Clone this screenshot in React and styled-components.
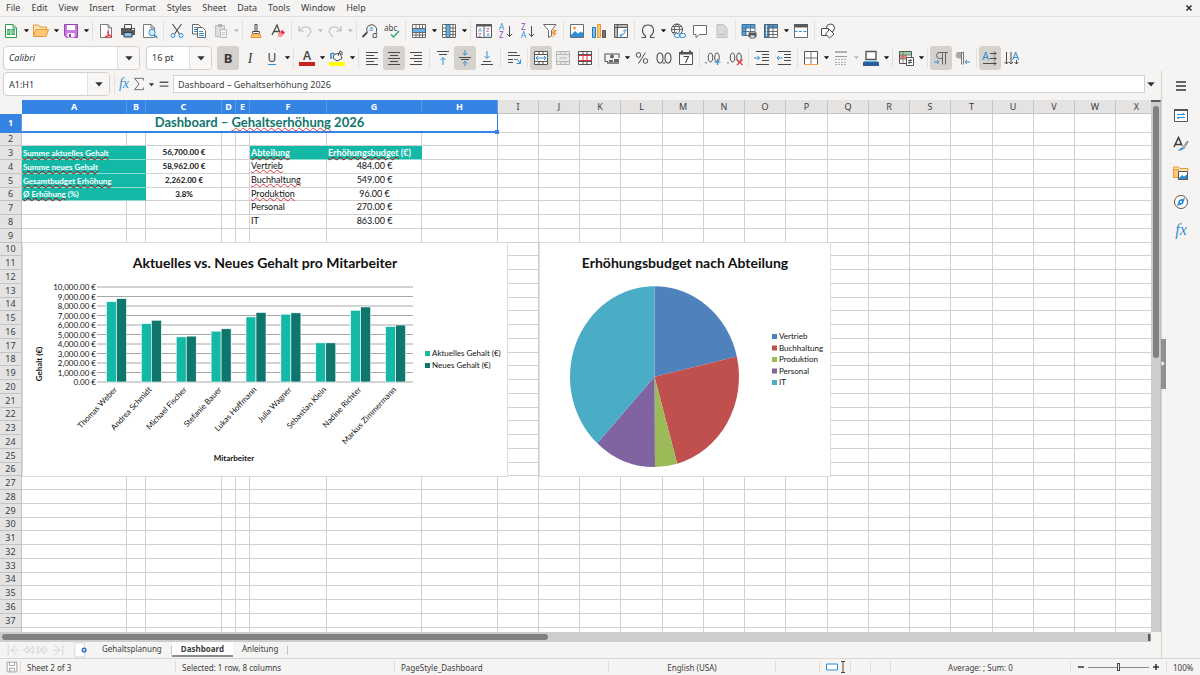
import React from 'react';
import styled, { createGlobalStyle, css } from 'styled-components';

const Global = createGlobalStyle`
  *, *::before, *::after { box-sizing: border-box; }
  body { margin: 0; background: #f5f4f2; color: #3c4043; font-family: "Noto Sans", sans-serif; font-size: 8px; }
  button, input, select { font: inherit; color: inherit; margin: 0; }
`;

const INK = '#4a4a4a';
const BLUE = '#2f8fd8';
const RED = '#e0353b';

/* ---------- icons, all on a 16 unit grid ---------- */

const line = (d, stroke = INK, width = 1) => (
  <path d={d} fill="none" stroke={stroke} strokeWidth={width} />
);
const fill = (d, color) => <path d={d} fill={color} />;
const glyph = (x, y, size, color, text, family = 'Noto Sans') => (
  <text x={x} y={y} fontSize={size} fill={color} fontFamily={family}>{text}</text>
);
const page = (x = 2, y = 1) => (
  <path d={`M${x + 0.5} ${y + 0.5}h7.5l3.5 3.5v9.5h-11zM${x + 8} ${y + 0.5}v3.5h3.5`} fill="#fff" stroke="#7a7a7a" />
);

const icons = {
  new: <>
    <path d="M2.500 1.500h7.500l3.500 3.500v9.500h-11z" fill="#fff" stroke="#2f9e4f" />
    {fill('M4 6h8v6h-8z', '#35a853')}{line('M4 8h8M4 10h8M8 6v6', '#d9f2df', 0.8)}{line('M10 1.500v3.500h3.500', '#2f9e4f')}
  </>,
  open: <>
    <path d="M.5 13.500v-11.500h5l1.500 2h6.500v3" fill="#fce3b4" stroke="#e9983a" />
    <path d="M3 6.500h12.500l-2.500 7h-12.500z" fill="#fbc873" stroke="#e9983a" />
  </>,
  save: <>
    <path d="M1.500 1.500h13v13h-11l-2-2z" fill="#c77ddb" stroke="#9a3fb5" />
    {fill('M4 2h8v5h-8z', '#fff')}{fill('M4.500 10h7v4.500h-7z', '#fff')}{fill('M6 11h2v3h-2z', '#9a3fb5')}
  </>,
  pdf: <>{page(2, 1)}{line('M8 15c2-2 3-5 2-8M7 14c2-1.500 4-2 7-1M9.500 9c1 2.500 2.500 4.500 4.500 5.500', RED, 1.2)}</>,
  print: <>
    {line('M4.500 5v-3.500h7v3.500')}{fill('M1 5h14v7h-14z', '#5a5a5a')}
    <path d="M4 9.500h8v4.500h-8z" fill="#7fc0ee" stroke="#3c3c3c" />{fill('M12 6h2v1h-2z', '#fff')}
  </>,
  preview: <>{page(1, 1)}<circle cx="10" cy="9.500" r="3.200" fill="#d6ecfb" stroke={BLUE} />{line('M12.300 12l3 3', BLUE, 1.4)}</>,
  cut: <>
    {line('M3.500 1l7 10M12.500 1l-7 10', INK, 1.1)}
    <circle cx="4" cy="12.500" r="2" fill="none" stroke={BLUE} /><circle cx="12" cy="12.500" r="2" fill="none" stroke={BLUE} />
  </>,
  copy: <>
    <path d="M1.500 1.500h6l2 2v7.500h-8z" fill="#fff" stroke="#6a6a6a" />{line('M3 4.500h4M3 6.500h4M3 8.500h3', BLUE)}
    <path d="M6.500 4.500h5l3 3v7h-8z" fill="#fff" stroke="#6a6a6a" />{line('M8 8.500h4M8 10.500h5M8 12.500h5', BLUE)}
  </>,
  paste: <>
    <path d="M2.500 2.500h9v11h-9z" fill="#dedede" stroke="#bdbdbd" />{fill('M5 1h4v3h-4z', '#b5b5b5')}
    <path d="M7.500 6.500h6v8h-6z" fill="#f4f4f4" stroke="#bdbdbd" />{line('M9 9.500h3M9 11.500h3', '#c8c8c8')}
  </>,
  brush: <>
    {line('M7 8v-6.500h2v6.500')}<path d="M4.500 8.500h7v2h-7z" fill="#fff" stroke={INK} />
    <path d="M4 11l-1 3.500h10l-1-3.500z" fill="#fbc873" stroke="#e9983a" />
  </>,
  clear: <>
    {line('M2 12l5-10 3 8M3.500 8.500h5.500', INK, 1.3)}
    <path d="M8 11l4-4 3 2.500-4 4.500h-2z" fill={RED} />{fill('M8 11l2-2 3 2.500-2 2.500h-2z', '#f59a9d')}
  </>,
  undo: line('M2 3v5h5M2.500 7.500c2-4 9-5 11-1 1.200 3-1 5.500-4 7.500', '#c2c2c2', 1.2),
  redo: line('M14 3v5h-5M13.500 7.500c-2-4-9-5-11-1-1.200 3 1 5.500 4 7.500', '#c2c2c2', 1.2),
  find: <>
    {line('M5.500 9.500a5 5 0 1 1 9-1.500')}{line('M5 9.500l-4.500 4.500', INK, 1.8)}
    {glyph(7, 8, 7, BLUE, 'a')}{glyph(10, 15, 9, INK, 'd')}
  </>,
  spell: <>{glyph(0, 8, 8, INK, 'abc')}{line('M7 11.500l2.500 2.500 5.500-6', '#2fa866', 1.4)}</>,
  row: <>
    {fill('M1 1h14v14h-14z', '#fff')}{fill('M1 5.500h14v4h-14z', '#5fb0ea')}
    {line('M1.500 1.500h13v13h-13zM1.500 5.500h13M1.500 9.500h13M1.500 12h13M5 1.500v4M8.500 1.500v4M11.500 1.500v4M5 9.500v5M8.500 9.500v5M11.500 9.500v5', '#5a5a5a', 0.9)}
  </>,
  col: <>
    {fill('M1 1h14v14h-14z', '#fff')}{fill('M5 1h4v14h-4z', '#5fb0ea')}
    {line('M1.500 1.500h13v13h-13zM5 1.500v13M9 1.500v13M12 1.500v13M1.500 5h3.500M1.500 8.500h3.500M1.500 11.500h3.500M9 5h5.500M9 8.500h5.500M9 11.500h5.500', '#5a5a5a', 0.9)}
  </>,
  sort: <>
    <path d="M.500 1.500h15v13h-15z" fill="#fff" stroke="#5a5a5a" />{fill('M.500 1h15v2.500h-15z', '#5a5a5a')}{line('M8 3v12', '#5a5a5a')}
    {glyph(2, 9, 6, BLUE, 'A')}{glyph(2, 14, 6, '#a347ba', 'Z')}{glyph(10, 9, 6, '#a347ba', 'Z')}{glyph(10, 14, 6, BLUE, 'A')}
  </>,
  az: <>{glyph(1, 7, 8, BLUE, 'A')}{glyph(1, 15, 8, '#a347ba', 'Z')}{line('M11.500 3v10.500M8.800 10.800l2.700 2.700 2.700-2.700')}</>,
  za: <>{glyph(1, 7, 8, '#a347ba', 'Z')}{glyph(1, 15, 8, BLUE, 'A')}{line('M11.500 3v10.500M8.800 10.800l2.700 2.700 2.700-2.700')}</>,
  filter: <><path d="M1.500 1.500h12.500l-4.500 6v5.500l-3 1.500v-7z" fill="#fff" stroke="#6a6a6a" />{fill('M11 7h4l-2 3h2l-5 5 1.500-4h-2z', '#f3a143')}</>,
  image: <>
    <path d="M1.500 1.500h13v13h-13z" fill="#fff" stroke="#6a6a6a" />{fill('M2 12l4-4 3 2.500 3-2 2 1.500v4h-12z', BLUE)}<circle cx="5.500" cy="5" r="1.500" fill="#f3a143" />
  </>,
  chart: <>
    <path d="M1.500 4.500h3v10h-3z" fill="#7fc0ee" stroke="#2577b8" /><path d="M6.500 1.500h3v13h-3z" fill="#fbc873" stroke="#e9983a" /><path d="M11.500 7.500h3v7h-3z" fill="#777" stroke="#555" />
  </>,
  pivot: <>
    <path d="M1.500 1.500h13v13h-13z" fill="#fff" stroke="#5a5a5a" />{fill('M2 2h2.500v12h-2.500zM2 2h12v2.500h-12z', '#b9b9b9')}{line('M4.500 2v12M2 4.500h12', '#5a5a5a')}
    {line('M7 12.500c3 0 5-2 5-5M10 8.500l2-2 2 2M9 10.500l-2 2 2 2', BLUE)}
  </>,
  omega: line('M1.500 14.500h4v-1.500c-5-4-3.500-11 2.500-11s7.500 7 2.500 11v1.500h4', INK, 1.1),
  link: <>
    <circle cx="7" cy="6.500" r="5.500" fill="none" stroke={INK} />{line('M1.500 6.500h11M7 1c-3.500 3-3.500 8 0 11M7 1c3.500 3 3.500 8 0 11M2.500 3.500h9M2.500 9.500h4', INK, 0.8)}
    <rect x="4.500" y="10.500" width="5.500" height="4" rx="2" fill="#f5f4f2" stroke={BLUE} /><rect x="9.500" y="10.500" width="6" height="4" rx="2" fill="none" stroke={BLUE} />
  </>,
  comment: <path d="M1.500 2.500h13v9h-7l-3.500 3v-3h-2.500z" fill="#fff" stroke="#6a6a6a" />,
  header: <><path d="M3 1.500h6.500l3.500 3.500v9.500h-10z" fill="#d8d8d8" stroke="#c0c0c0" />{line('M5 11.500h6', '#b8b8b8')}</>,
  printarea: <>
    {fill('M1 1h13v12h-13z', '#fff')}{fill('M1 1h13v4h-13zM1 5h4v7h-4z', '#4aa3e4')}{line('M1 1.500h13v11h-13zM1 5h13M1 8.500h13M5 1v12M9.500 1v12', '#4a6a86', 0.9)}
    {fill('M7.500 9.500h8v4.500h-8z', '#5a5a5a')}<path d="M9 12h5v3h-5z" fill="#d6ecfb" stroke="#4a4a4a" strokeWidth=".8" />
  </>,
  freeze: <>
    {fill('M1 1h14v14h-14z', '#fff')}{fill('M1 1h14v4h-14zM1 1h5v14h-5z', '#3b97de')}
    {line('M1.500 1.500h13v13h-13zM1.500 5h13M1.500 8.500h13M1.500 11.500h13M6 1.500v13M10 1.500v13', '#5a5a5a', 0.9)}{line('M3.500 2v11', '#fff', 0.8)}
  </>,
  split: <>
    <path d="M1.500 1.500h13v13h-13z" fill="#fff" stroke="#6a6a6a" />{fill('M1 1h14v3.500h-14z', '#5a5a5a')}<path d="M1.500 8.500h13" stroke={BLUE} strokeDasharray="3 1.500" />
  </>,
  shapes: <>
    <circle cx="10.500" cy="5" r="4" fill="#fff" stroke={INK} /><path d="M1.500 5.500h7v7h-7z" fill="#fff" stroke={INK} /><path d="M9.500 6.500l4.500 4.500-4.500 4-4-4z" fill="#fff" stroke={INK} />
  </>,
  bold: <text x="8" y="13" fontSize="13" fontWeight="700" textAnchor="middle" fill="#3a3a3a" fontFamily="Noto Sans">B</text>,
  italic: <text x="8" y="13" fontSize="14" fontStyle="italic" textAnchor="middle" fill="#3a3a3a" fontFamily="Liberation Serif">I</text>,
  underline: <><text x="8" y="12" fontSize="12" textAnchor="middle" fill="#3a3a3a" fontFamily="Noto Sans">U</text>{fill('M4 14h8v1h-8z', BLUE)}</>,
  fontcolor: <><text x="8" y="10" fontSize="12" fontWeight="600" textAnchor="middle" fill="#4a4a4a" fontFamily="Noto Sans">A</text>{fill('M0 12h16v4h-16z', '#c9211e')}</>,
  highlight: <>
    <path d="M5 4.500l6-1.500 2 5.500-5 2.500-4-3z" fill="#fff" stroke={INK} />{line('M2 9v-6M2.500 3.500h3', BLUE, 1.6)}{line('M9 6l2-5 2 1v3', INK)}
    {fill('M0 12h16v4h-16z', '#ffff00')}
  </>,
  left: line('M2 2.500h12M2 5.500h8M2 8.500h12M2 11.500h8M2 14.500h12'),
  center: line('M2 2.500h12M4 5.500h8M2 8.500h12M4 11.500h8M2 14.500h12'),
  right: line('M2 2.500h12M6 5.500h8M2 8.500h12M6 11.500h8M2 14.500h12'),
  top: <>{line('M2 1.500h12M4 4.500h8')}{line('M8 15v-7M5.500 10l2.500-2.500 2.500 2.500', BLUE)}</>,
  middle: <>{line('M2 7.500h12M4 9.500h8')}{line('M8 0v5M5.800 3l2.200 2.200 2.200-2.200M8 16v-4.500M5.800 13.500l2.200-2.200 2.200 2.200', BLUE)}</>,
  bottom: <>{line('M2 14.500h12M4 11.500h8')}{line('M8 1v7M5.500 6l2.500 2.500 2.500-2.500', BLUE)}</>,
  wrap: <>{line('M2 2.500h9M2 5.500h12M2 9.500h5M2 12.500h5')}{line('M8 9.500h3.500l2.500 3.500M14.500 9.500v4h-4', BLUE)}</>,
  merge: <>
    <path d="M1.500 1.500h13v13h-13z" fill="#fff" stroke="#555" />{line('M1.500 4.500h13M1.500 11.500h13M6 1.500v3M10 1.500v3M6 11.500v3M10 11.500v3', '#555')}{line('M3 8h10M5 6l-2 2 2 2M11 6l2 2-2 2', BLUE)}
  </>,
  center2: <>
    <path d="M1.500 1.500h13v13h-13z" fill="#eaeaea" stroke="#b5b5b5" />{line('M1.500 4.500h13M1.500 11.500h13M6 1.500v3M10 1.500v3M6 11.500v3M10 11.500v3M4 8h8', '#b5b5b5')}
  </>,
  unmerge: <>
    <path d="M1.500 1.500h13v13h-13z" fill="#fff" stroke="#555" />{line('M1.500 4.500h13M1.500 11.500h13M6 1.500v3M10 1.500v3M6 11.500v3M10 11.500v3', '#555')}{line('M1.500 5.500h13M1.500 10.500h13M6 5v6M10 5v6', RED, 1)}
  </>,
  currency: <>
    {line('M1 11.500v-7.500h14v4M1 11.500h3', '#555', 1.1)}<circle cx="8" cy="6.500" r="2" fill="#666" />{fill('M5 10h4v4h-4zM10 9h5v5h-5z', '#666')}{fill('M3 12h12v2h-12z', '#888')}
  </>,
  percent: <><circle cx="4.500" cy="5" r="2.300" fill="none" stroke={INK} /><circle cx="11.500" cy="11" r="2.300" fill="none" stroke={INK} />{line('M11.500 2.500l-7 11')}</>,
  number: line('M4 3c-4 0-4 10 0 10s4-10 0-10zM12 3c-4 0-4 10 0 10s4-10 0-10zM8 12v2', INK, 1.1),
  date: <><path d="M1.500 2.500h13v12h-13z" fill="#fff" stroke="#555" />{fill('M1 2h14v2.500h-14zM3 .500h2v2h-2zM11 .500h2v2h-2z', '#555')}{line('M5.500 6.500h5l-3 6.500', INK, 1.1)}</>,
  adddec: <>{line('M1 12v1.500M5.500 3c-3 0-3 9 0 9s3-9 0-9zM12 3c-3 0-3 9 0 9s3-9 0-9z')}{line('M12.500 9v6M9.500 12h6', BLUE, 1.2)}</>,
  deldec: <>{line('M1 12v1.500M5.500 3c-3 0-3 9 0 9s3-9 0-9zM12 3c-3 0-3 9 0 9s3-9 0-9z')}{line('M10 9.500l5.500 5.500M15.500 9.500l-5.500 5.500', RED, 1.2)}</>,
  indent: <>{line('M2 1.500h13M8 4.500h7M8 7.500h7M8 10.500h7M2 14.500h13')}{line('M0 8h5.500M3.500 6l2 2-2 2', BLUE)}</>,
  outdent: <>{line('M2 1.500h13M8 4.500h7M8 7.500h7M8 10.500h7M2 14.500h13')}{line('M6.500 8h-5.500M3 6l-2 2 2 2', BLUE)}</>,
  border: <><path d="M1.500 1.500h13v13h-13z" fill="#fff" stroke="#555" />{line('M8 2v12M2 8h12', '#777')}{line('M1 14.500h14', '#f3a143')}</>,
  borderstyle: <>{fill('M2 1h12v2h-12z', '#b0b0b0')}{line('M2 6.500h12', '#9a9a9a')}<path d="M2 9.500h12M2 12.500h12M2 14.500h12" stroke="#b0b0b0" strokeDasharray="2 1" /></>,
  bordercolor: <><path d="M3 1.500h10v8h-10z" fill="#fff" stroke="#555" strokeWidth="1.4" />{fill('M1 11h14v1h-14z', '#5fb0ea')}{fill('M0 12h16v4h-16z', '#2a6099')}</>,
  condformat: <>
    <path d="M1.500 1.500h12v12h-12z" fill="#fff" stroke="#555" />{fill('M2 2h11v3h-11z', '#8ed6a0')}{fill('M2 5h7v4h-7z', '#f08080')}{line('M1.500 5h12M1.500 9h8M5 2v11', '#777', 0.9)}
    <path d="M8.500 7.500h7v8h-7z" fill="#fff" stroke="#555" />{line('M10 10.500h4M10 12.500h4M13 9l-2 5', INK, 0.9)}
  </>,
  ltr: <>{line('M9.500 2v12.500M12.500 2v12.500M5 2.500h10', '#666')}{line('M9 2.500h-2.500a3 3 0 0 0 0 6h2.500', '#666')}{line('M1 12h5M4 10l2 2-2 2', BLUE)}</>,
  rtl: <>{line('M6.500 2v12.500M8.500 2v12.500M2 2.500h7', '#777')}{fill('M6 2h-2a3.200 3.200 0 0 0 0 6.500h2z', '#aaa')}{line('M15 12h-5M12 10l-2 2 2 2', BLUE)}</>,
  textright: <>{glyph(0, 9.5, 11, BLUE, 'A')}{line('M8 3.500h6M8 8.500h6M1 13.500h13M12 1.500l2 2-2 2M12 6.500l2 2-2 2M12 11.500l2 2-2 2')}</>,
  textdown: <>{glyph(8, 9.5, 11, BLUE, 'A')}{line('M2.500 2v12M7 2v12M12.500 10v4M.500 12l2 2 2-2M5 12l2 2 2-2M10.500 12l2 2 2-2')}</>,
  menu: line('M3 4h10M3 8h10M3 12h10', '#2e3436', 1.6),
  properties: <><path d="M1.500 2.500h13v12h-13z" fill="#fff" stroke="#555" />{fill('M1 2h14v2h-14z', '#555')}{line('M4 7.500h8M9.500 6l2 1.500M4 10.500h8M6 12l-2-1.500', BLUE)}</>,
  styles: <>{line('M1 11l4.500-9.500 3.500 8M2.500 8.500h6', '#3c3c3c', 1.5)}{line('M14.500 5l-5 6.500 1.500 1 4-6.500z', '#666', 0.9)}{fill('M4 14c3 .500 3-3 6-2.500 1 2-2 4-6 2.500z', BLUE)}</>,
  gallery: <><path d="M.500 12.500v-10.500h5l1.500 1.500h8v3" fill="#fce3b4" stroke="#e9983a" /><path d="M.500 12.500v-8h5v8z" fill="#fbc873" stroke="#e9983a" /><path d="M5.500 6.500h9v8h-9z" fill="#fff" stroke="#555" />{fill('M6 13l3-3 2 1.500 3-2v4.500h-8z', BLUE)}</>,
  navigator: <><circle cx="8" cy="8" r="6.500" fill="#fff" stroke="#555" />{fill('M12 4l-2 6-6 2 2-6z', BLUE)}<circle cx="8" cy="8" r="1" fill="#fff" /></>,
  fx: <text x="8" y="12" fontSize="16" fontStyle="italic" textAnchor="middle" fill={BLUE} fontFamily="Liberation Serif">fx</text>,
  sigma: line('M13 4v-2.500h-10l5 6.500-5 6.500h10v-2.500', '#666', 1.1),
  equals: line('M3 6h10M3 10.500h10', '#555', 1.5),
  disk: <><path d="M1.500 1.500h13v13h-13z" fill="#fff" stroke="#888" />{line('M4.500 2v4h7v-4M4.500 14v-4.500h7v4.500M7 11v2', '#888')}</>,
  close: line('M4 4l8 8M12 4l-8 8', '#2e3436', 2.6),
  addsheet: <><path d="M1 0h11v16h-11z" fill="#fff" stroke="#d4d4d4" /><circle cx="11.500" cy="8" r="2" fill="#fff" stroke="#2f6fbf" strokeWidth="1.800" /></>,
  first: line('M2.500 2v12M12 2l-6 6 6 6M5 8h9', '#cfcfcf'),
  prev: line('M8 4l-5 4 5 4zM14 4l-5 4 5 4z', '#cfcfcf'),
  next: line('M2 4l5 4-5 4zM8 4l5 4-5 4z', '#cfcfcf'),
  last: line('M13.500 2v12M4 2l6 6-6 6M2 8h9', '#cfcfcf'),
};

const IconSvg = styled.svg`
  display: block;
  flex: none;
  overflow: visible;
  width: ${(p) => p.$size}px;
  height: ${(p) => p.$size}px;
`;
const Icon = ({ name, size = 16 }) => (
  <IconSvg viewBox="0 0 16 16" $size={size} aria-hidden="true">{icons[name]}</IconSvg>
);

const Caret = ({ size = 8, color = '#2e3436' }) => (
  <IconSvg viewBox="0 0 8 8" $size={size} aria-hidden="true"><path d="M1 2.500h6l-3 3.500z" fill={color} /></IconSvg>
);

/* ---------- shell ---------- */

const Shell = styled.div`
  display: flex;
  flex-direction: column;
  height: 100vh;
  overflow: hidden;
`;
const MenuBar = styled.nav`
  display: flex;
  align-items: center;
  gap: 11px;
  height: 17px;
  padding: 0 6px;
  border-bottom: 1px solid #e3e1df;
  flex: none;
`;
const plainButton = css`
  border: 0;
  padding: 0;
  background: none;
  display: flex;
  align-items: center;
  justify-content: center;
`;
const MenuItem = styled.button`
  ${plainButton}
  font-size: 9px;
  line-height: 14px;
`;
const CloseButton = styled.button`
  ${plainButton}
  margin-left: auto;
`;
const Toolbar = styled.div`
  display: flex;
  align-items: center;
  height: 27px;
  flex: none;
  padding-left: ${(p) => p.$inset || 0}px;
`;
const ToolButton = styled.button`
  ${plainButton}
  flex: none;
  width: ${(p) => p.$width || 22}px;
  height: 24px;
  border-radius: 3px;
  background: ${(p) => (p.$active ? '#d5d1cd' : 'transparent')};
`;
const Separator = styled.span`
  flex: none;
  width: 1px;
  height: 20px;
  margin: 0 2px;
  background: #e3e1df;
`;

const Combo = styled.div`
  display: flex;
  align-items: center;
  flex: none;
  position: relative;
  width: ${(p) => p.$width}px;
  height: 24px;
  margin-right: ${(p) => p.$gap || 6}px;
  background: #fff;
  border: 1px solid #d3d0cd;
  border-radius: 4px;
  overflow: hidden;
`;
const comboField = css`
  flex: 1;
  min-width: 0;
  height: 100%;
  padding: 0 5px;
  border: 0;
  background: none;
  appearance: none;
  outline: none;
  font-size: 9px;
  color: #2e3436;
`;
const ComboSelect = styled.select`
  ${comboField}
  font-style: ${(p) => (p.$italic ? 'italic' : 'normal')};
`;
const ComboInput = styled.input`${comboField}`;
const ComboArrow = styled.span`
  display: flex;
  align-items: center;
  justify-content: center;
  width: 22px;
  height: 100%;
  background: #f8f7f6;
  border-left: 1px solid #e3e1df;
  pointer-events: none;
`;

const Body = styled.div`
  display: flex;
  flex: 1;
  min-height: 0;
`;
const Main = styled.main`
  display: flex;
  flex-direction: column;
  flex: 1;
  min-width: 0;
`;
const FormulaBar = styled.div`
  display: flex;
  align-items: center;
  height: 29px;
  flex: none;
  padding: 0 4px 3px 3px;
`;
const FormulaInput = styled.input`
  flex: 1;
  min-width: 0;
  height: 18px;
  padding: 0 4px;
  border: 1px solid #d3d0cd;
  background: #fff;
  outline: none;
  font-size: 9px;
`;

/* ---------- sheet ---------- */

const SheetArea = styled.div`
  display: flex;
  flex: 1;
  min-height: 0;
`;
const Viewport = styled.div`
  position: relative;
  flex: 1;
  min-width: 0;
  overflow: hidden;
  background: #fff;
`;
const Sheet = styled.table`
  border-collapse: separate;
  border-spacing: 0;
  table-layout: fixed;
  width: 1px;
  color: #111;
`;
const HeadRow = styled.tr`height: 14px;`;
const Row = styled.tr`
  height: 14px;
  &:nth-child(4n + 2) { height: 13px; }
  &:first-child { height: 19px; }
`;
const HeadCell = styled.th`
  padding: 0;
  font-size: 9px;
  line-height: 12px;
  font-weight: ${(p) => (p.$selected ? 700 : 400)};
  color: ${(p) => (p.$selected ? '#fff' : '#3c4043')};
  background: ${(p) => (p.$selected ? '#3584e4' : '#e4e3e1')};
  border-right: 1px solid ${(p) => (p.$selected ? '#5a9be9' : '#c4c4c4')};
  border-bottom: 1px solid ${(p) => (p.$selected ? '#3584e4' : '#c4c4c4')};
`;
const Corner = styled.td`
  padding: 0;
  background: #f5f4f2;
`;
const Cell = styled.td`
  padding: 0 0 0 1px;
  font-family: Lato, "Noto Sans", sans-serif;
  font-size: ${(p) => (p.$small ? 8 : 9)}px;
  line-height: 12px;
  white-space: nowrap;
  vertical-align: ${(p) => (p.$fill ? 'bottom' : 'top')};
  text-align: ${(p) => (p.$center ? 'center' : 'left')};
  font-weight: ${(p) => (p.$bold ? 700 : 400)};
  color: ${(p) => (p.$fill ? '#fff' : '#111')};
  background: ${(p) => (p.$fill ? '#14b8a6' : '#fff')};
  border-right: 1px solid ${(p) => (p.$fill ? '#14b8a6' : '#d0d0d0')};
  border-bottom: 1px solid ${(p) => (p.$fill ? '#8fdcd3' : '#d0d0d0')};
`;
const TitleCell = styled.td`
  position: relative;
  padding: 0;
  text-align: center;
  vertical-align: top;
  font-family: Lato, "Noto Sans", sans-serif;
  font-size: 13px;
  line-height: 16px;
  font-weight: 700;
  color: #0f766e;
  background: #fff;
  border-right: 1px solid #3584e4;
  border-bottom: 2px solid #3584e4;
`;
const FillHandle = styled.span`
  position: absolute;
  right: -2px;
  bottom: -3px;
  width: 4px;
  height: 4px;
  background: #3584e4;
`;
const Misspelt = styled.span`
  text-decoration: underline wavy ${(p) => (p.$dark ? '#c00000' : '#e0353b')} 1px;
  text-decoration-skip-ink: none;
  text-underline-offset: 0;
`;

const VScroll = styled.div`
  flex: none;
  width: 10px;
  padding: 4px 2px 0;
  background: #cdcdcd;
  border-top: 2px solid #5a5a5a;
  border-right: 1px solid #c0c0c0;
`;
const VThumb = styled.div`
  width: 6px;
  height: 48%;
  border-radius: 3px;
  background: #7f817f;
`;
const HScroll = styled.div`
  flex: none;
  display: flex;
  justify-content: space-between;
  align-items: center;
  height: 10px;
  margin-right: 10px;
  padding-left: 2px;
  background: #cdcdcd;
`;
const HThumb = styled.div`
  width: 47.500%;
  height: 6px;
  border-radius: 3px;
  background: #7f817f;
`;
const HEnd = styled.div`
  width: 3px;
  height: 7px;
  background: #5a5a5a;
  border-right: 1px solid #999;
`;

const TabBar = styled.div`
  display: flex;
  align-items: center;
  height: 16px;
  flex: none;
  padding-left: 5px;
`;
const TabNav = styled.div`
  display: flex;
  width: 66px;
`;
const AddSheet = styled.button`
  ${plainButton}
  width: 20px;
  margin-right: 2px;
`;
const Tab = styled.button`
  ${plainButton}
  height: 15px;
  align-self: flex-start;
  padding: 0 9px;
  font-size: 8px;
  font-weight: ${(p) => (p.$active ? 700 : 400)};
  background: ${(p) => (p.$active ? '#fff' : 'transparent')};
  border-bottom: 2px solid ${(p) => (p.$active ? '#8a8c8a' : 'transparent')};
`;
const TabDivider = styled.span`
  width: 1px;
  height: 9px;
  background: #c4c4c4;
`;

const Sidebar = styled.aside`
  position: relative;
  display: flex;
  flex-direction: column;
  align-items: center;
  gap: 5px;
  width: 39px;
  flex: none;
  padding-top: 3px;
  border-left: 1px solid #d3d0cd;
`;
const Collapse = styled.button`
  position: absolute;
  left: -1px;
  top: 45.600%;
  width: 5px;
  height: 50px;
  padding: 0;
  border: 0;
  background: #8f918f;
  display: flex;
  align-items: center;
`;

const StatusBar = styled.footer`
  display: grid;
  grid-template-columns: 21px 155px 219px 214px 1fr 44px 31px 20px 20px 180px 96px 33px;
  align-items: center;
  height: 17px;
  flex: none;
  border-top: 1px solid #d9d7d5;
`;
const StatusItem = styled.div`
  display: flex;
  align-items: center;
  justify-content: ${(p) => (p.$center ? 'center' : 'flex-start')};
  gap: 3px;
  height: 12px;
  padding: 0 6px;
  white-space: nowrap;
  border-right: 1px solid ${(p) => (p.$plain ? 'transparent' : '#e0dedc')};
`;
const ZoomSlider = styled.input`
  appearance: none;
  flex: 1;
  min-width: 0;
  height: 8px;
  background: linear-gradient(#8a8a8a, #8a8a8a) center / 100% 1px no-repeat;
  &::-webkit-slider-thumb {
    appearance: none;
    width: 3px;
    height: 8px;
    background: #f5f4f2;
    border: 1px solid #4a4a4a;
  }
`;
const ZoomButton = styled.button`
  ${plainButton}
  width: 8px;
  flex: none;
`;

/* ---------- charts ---------- */

const ChartFrame = styled.figure`
  position: absolute;
  top: 142px;
  left: ${(p) => p.$left}px;
  width: ${(p) => p.$width}px;
  height: 235px;
  margin: 0;
  background: #fff;
  border: 1px solid #dcdcdc;
`;
const ChartSvg = styled.svg`
  display: block;
  width: 100%;
  height: 100%;
  font-family: Lato, "Noto Sans", sans-serif;
  font-size: 8px;
  fill: #111;
`;

const salaries = [
  ['Thomas Weber', 8450, 8780],
  ['Andrea Schmidt', 6150, 6500],
  ['Michael Fischer', 4750, 4830],
  ['Stefanie Bauer', 5350, 5600],
  ['Lukas Hoffmann', 6850, 7320],
  ['Julia Wagner', 7140, 7280],
  ['Sebastian Klein', 4120, 4120],
  ['Nadine Richter', 7550, 7900],
  ['Markus Zimmermann', 5830, 6000],
];
const budgets = [
  ['Vertrieb', 484, '#4f81bd'],
  ['Buchhaltung', 549, '#c0504d'],
  ['Produktion', 96, '#9bbb59'],
  ['Personal', 270, '#8064a2'],
  ['IT', 863, '#4bacc6'],
];

const BarChart = () => {
  const x0 = 76, x1 = 390, y0 = 139, h = 95;
  const step = (x1 - x0) / salaries.length;
  return (
    <ChartFrame $left={22} $width={486}>
      <ChartSvg viewBox="0 0 484 233" role="img" aria-label="Aktuelles vs. Neues Gehalt pro Mitarbeiter">
        <text x="242" y="25" textAnchor="middle" fontSize="14" fontWeight="700">Aktuelles vs. Neues Gehalt pro Mitarbeiter</text>
        {Array.from({ length: 11 }, (_, i) => {
          const y = y0 - (h * i) / 10;
          return (
            <g key={i}>
              <path d={`M${x0 - 2} ${y}H${x1}`} stroke="#a6a6a6" />
              <text x="73" y={y + 3} textAnchor="end">{`${(i * 1000).toLocaleString('en-US')}.00 €`}</text>
            </g>
          );
        })}
        {salaries.map(([name, now, next], i) => {
          const c = x0 + step * (i + 0.5);
          return (
            <g key={name}>
              <rect x={c - 10} y={y0 - (h * now) / 10000} width="10" height={(h * now) / 10000} fill="#14b8a6" stroke="#fff" strokeWidth=".6" />
              <rect x={c} y={y0 - (h * next) / 10000} width="10" height={(h * next) / 10000} fill="#0f766e" stroke="#fff" strokeWidth=".6" />
              <text transform={`translate(${c + 1} 147) rotate(-47)`} textAnchor="end">{name}</text>
            </g>
          );
        })}
        <text transform="translate(19 121) rotate(-90)" textAnchor="middle" fontWeight="700">Gehalt (€)</text>
        <text x="211" y="218" textAnchor="middle" fontWeight="700">Mitarbeiter</text>
        <path d="M402 108h5v5h-5z" fill="#14b8a6" />
        <path d="M402 120h5v5h-5z" fill="#0f766e" />
        <text x="409" y="113">Aktuelles Gehalt (€)</text>
        <text x="409" y="125">Neues Gehalt (€)</text>
      </ChartSvg>
    </ChartFrame>
  );
};

const PieChart = () => {
  const cx = 114.5, cy = 133.7, rx = 84.5, ry = 90.4;
  const total = budgets.reduce((s, b) => s + b[1], 0);
  let start = 0;
  const point = (t) => `${cx + rx * Math.sin(t * 2 * Math.PI)} ${cy - ry * Math.cos(t * 2 * Math.PI)}`;
  return (
    <ChartFrame $left={539} $width={292}>
      <ChartSvg viewBox="0 0 290 233" role="img" aria-label="Erhöhungsbudget nach Abteilung">
        <text x="145" y="25" textAnchor="middle" fontSize="14" fontWeight="700">Erhöhungsbudget nach Abteilung</text>
        {budgets.map(([name, value, color], i) => {
          const end = start + value / total;
          const d = `M${cx} ${cy}L${point(start)}A${rx} ${ry} 0 0 1 ${point(end)}Z`;
          start = end;
          return (
            <g key={name}>
              <path d={d} fill={color} />
              <rect x="232" y={91 + i * 11.5} width="5" height="5" fill={color} />
              <text x="239" y={96 + i * 11.5}>{name}</text>
            </g>
          );
        })}
      </ChartSvg>
    </ChartFrame>
  );
};

/* ---------- data ---------- */

// "+" adds a drop-down arrow, "*" marks a pressed button, "-" a greyed arrow
const standardTools = 'new+ open+ save+ | pdf print preview | cut copy paste- | brush clear | undo- redo- | find spell | row+ col+ | sort az za filter | image chart pivot | omega+ link comment header | printarea freeze+ split | shapes'.split(' ');
const formatTools = 'bold* italic underline+ | fontcolor+ highlight+ | left center* right | top middle* bottom | wrap | merge* center2 unmerge | currency+ percent number date | adddec deldec | indent outdent | border+ borderstyle- bordercolor+ | condformat+ | ltr* rtl | textright* textdown'.split(' ');

const Tools = ({ items }) => items.map((item, i) => {
  if (item === '|') return <Separator key={i} />;
  const name = item.replace(/[+*-]/, '');
  return (
    <React.Fragment key={i}>
      <ToolButton type="button" aria-label={name} $active={item.endsWith('*')}><Icon name={name} /></ToolButton>
      {/[+-]$/.test(item) && (
        <ToolButton type="button" aria-label={`${name} options`} $width={8}>
          <Caret size={7} color={item.endsWith('-') ? '#bdbdbd' : '#111'} />
        </ToolButton>
      )}
    </React.Fragment>
  );
});

const columns = [
  ['A', 105], ['B', 19], ['C', 76], ['D', 14], ['E', 14], ['F', 77], ['G', 95], ['H', 76],
  ...Array.from('IJKLMNOPQRSTUVWX', (c, i) => [c, i % 4 === 3 ? 42 : 41]),
];

const summary = {
  3: ['Summe aktuelles Gehalt', '56,700.00 €'],
  4: ['Summe neues Gehalt', '58,962.00 €'],
  5: ['Gesamtbudget Erhöhung', '2,262.00 €'],
  6: ['Ø Erhöhung', '3.8%'],
};
const budgetRow = (n) => budgets[n - 4];

const renderCell = (n, col) => {
  if (col === 'A' && summary[n]) {
    return (
      <Cell key={col} colSpan={2} $fill $bold $small>
        <Misspelt $dark>{summary[n][0]}</Misspelt>{n === 6 && ' (%)'}
      </Cell>
    );
  }
  if (col === 'B' && summary[n]) return null;
  if (col === 'C' && summary[n]) return <Cell key={col} $center $bold $small>{summary[n][1]}</Cell>;
  if (n === 3 && col === 'F') return <Cell key={col} $fill $bold><Misspelt $dark>Abteilung</Misspelt></Cell>;
  if (n === 3 && col === 'G') return <Cell key={col} $fill $bold><Misspelt $dark>Erhöhungsbudget</Misspelt> (€)</Cell>;
  if (col === 'F' && budgetRow(n)) {
    const name = budgetRow(n)[0];
    return <Cell key={col}>{n < 7 ? <Misspelt>{name}</Misspelt> : name}</Cell>;
  }
  if (col === 'G' && budgetRow(n)) return <Cell key={col} $center>{`${budgetRow(n)[1]}.00 €`}</Cell>;
  return <Cell key={col} />;
};

const ROWS = 37;

const Grid = () => (
  <Sheet>
    <colgroup>
      <col width="22" />
      {columns.map(([c, w]) => <col key={c} width={w} />)}
    </colgroup>
    <thead>
      <HeadRow>
        <Corner />
        {columns.map(([c], i) => <HeadCell key={c} scope="col" $selected={i < 8}>{c}</HeadCell>)}
      </HeadRow>
    </thead>
    <tbody>
      {Array.from({ length: ROWS }, (_, i) => i + 1).map((n) => (
        <Row key={n}>
          <HeadCell scope="row" $selected={n === 1}>{n}</HeadCell>
          {n === 1 ? (
            <>
              <TitleCell colSpan={8}>
                Dashboard – <Misspelt>Gehaltserhöhung</Misspelt> 2026
                <FillHandle />
              </TitleCell>
              {columns.slice(8).map(([c]) => <Cell key={c} />)}
            </>
          ) : columns.map(([c]) => renderCell(n, c))}
        </Row>
      ))}
      <Row>
        <HeadCell />
        {columns.map(([c]) => <Cell key={c} />)}
      </Row>
    </tbody>
  </Sheet>
);

export default function App() {
  return (
    <Shell>
      <Global />
      <MenuBar>
        {['File', 'Edit', 'View', 'Insert', 'Format', 'Styles', 'Sheet', 'Data', 'Tools', 'Window', 'Help'].map((m) => (
          <MenuItem key={m} type="button">{m}</MenuItem>
        ))}
        <CloseButton type="button" aria-label="Close document"><Icon name="close" size={10} /></CloseButton>
      </MenuBar>
      <Toolbar><Tools items={standardTools} /></Toolbar>
      <Toolbar $inset={3}>
        <Combo $width={137}>
          <ComboSelect $italic aria-label="Font name" defaultValue="Calibri"><option>Calibri</option></ComboSelect>
          <ComboArrow><Caret size={10} /></ComboArrow>
        </Combo>
        <Combo $width={66} $gap={5}>
          <ComboSelect aria-label="Font size" defaultValue="16 pt"><option>16 pt</option></ComboSelect>
          <ComboArrow><Caret size={10} /></ComboArrow>
        </Combo>
        <Tools items={formatTools} />
      </Toolbar>
      <Body>
        <Main>
          <FormulaBar>
            <Combo $width={107} $gap={2}>
              <ComboInput aria-label="Name box" defaultValue="A1:H1" />
              <ComboArrow><Caret size={10} /></ComboArrow>
            </Combo>
            <Separator />
            <ToolButton type="button" aria-label="Function wizard" $width={14}><Icon name="fx" size={14} /></ToolButton>
            <ToolButton type="button" aria-label="Sum" $width={16}><Icon name="sigma" size={14} /></ToolButton>
            <ToolButton type="button" aria-label="Sum options" $width={8}><Caret size={7} /></ToolButton>
            <ToolButton type="button" aria-label="Formula" $width={18}><Icon name="equals" size={14} /></ToolButton>
            <FormulaInput aria-label="Formula input" defaultValue="Dashboard – Gehaltserhöhung 2026" />
            <ToolButton type="button" aria-label="Expand formula bar" $width={12}><Caret size={10} /></ToolButton>
          </FormulaBar>
          <SheetArea>
            <Viewport>
              <Grid />
              <BarChart />
              <PieChart />
            </Viewport>
            <VScroll><VThumb /></VScroll>
          </SheetArea>
          <HScroll><HThumb /><HEnd /></HScroll>
          <TabBar>
            <TabNav>
              {['first', 'prev', 'next', 'last'].map((n) => (
                <ToolButton key={n} type="button" aria-label={`${n} sheet`} $width={15}><Icon name={n} size={14} /></ToolButton>
              ))}
            </TabNav>
            <AddSheet type="button" aria-label="Add sheet"><Icon name="addsheet" size={14} /></AddSheet>
            <Tab type="button">Gehaltsplanung</Tab>
            <TabDivider />
            <Tab type="button" $active>Dashboard</Tab>
            <Tab type="button">Anleitung</Tab>
            <TabDivider />
          </TabBar>
        </Main>
        <Sidebar>
          {['menu', 'properties', 'styles', 'gallery', 'navigator', 'fx'].map((n) => (
            <ToolButton key={n} type="button" aria-label={n} $width={24}><Icon name={n} /></ToolButton>
          ))}
          <Collapse type="button" aria-label="Hide sidebar">
            <IconSvg viewBox="0 0 8 8" $size={5}><path d="M1 0l5 4-5 4z" fill="#fff" /></IconSvg>
          </Collapse>
        </Sidebar>
      </Body>
      <StatusBar>
        <StatusItem><Icon name="disk" size={12} /></StatusItem>
        <StatusItem>Sheet 2 of 3</StatusItem>
        <StatusItem>Selected: 1 row, 8 columns</StatusItem>
        <StatusItem>PageStyle_Dashboard</StatusItem>
        <StatusItem $center>English (USA)</StatusItem>
        <StatusItem />
        <StatusItem>
          <IconSvg viewBox="0 0 22 14" $size={22}>
            <path d="M.500 4h11v6h-11z" fill="#fff" stroke={BLUE} /><path d="M15 1.500h4M17 1.500v11M15 12.500h4" stroke={INK} fill="none" />
          </IconSvg>
        </StatusItem>
        <StatusItem />
        <StatusItem />
        <StatusItem $center>Average: ; Sum: 0</StatusItem>
        <StatusItem>
          <ZoomButton type="button" aria-label="Zoom out"><IconSvg viewBox="0 0 8 8" $size={8}><path d="M1 4h6" stroke="#2e3436" strokeWidth="1.500" /></IconSvg></ZoomButton>
          <ZoomSlider type="range" min="0" max="100" defaultValue="50" aria-label="Zoom" />
          <ZoomButton type="button" aria-label="Zoom in"><IconSvg viewBox="0 0 8 8" $size={8}><path d="M1 4h6M4 1v6" stroke="#2e3436" strokeWidth="1.500" /></IconSvg></ZoomButton>
        </StatusItem>
        <StatusItem $plain>100%</StatusItem>
      </StatusBar>
    </Shell>
  );
}
